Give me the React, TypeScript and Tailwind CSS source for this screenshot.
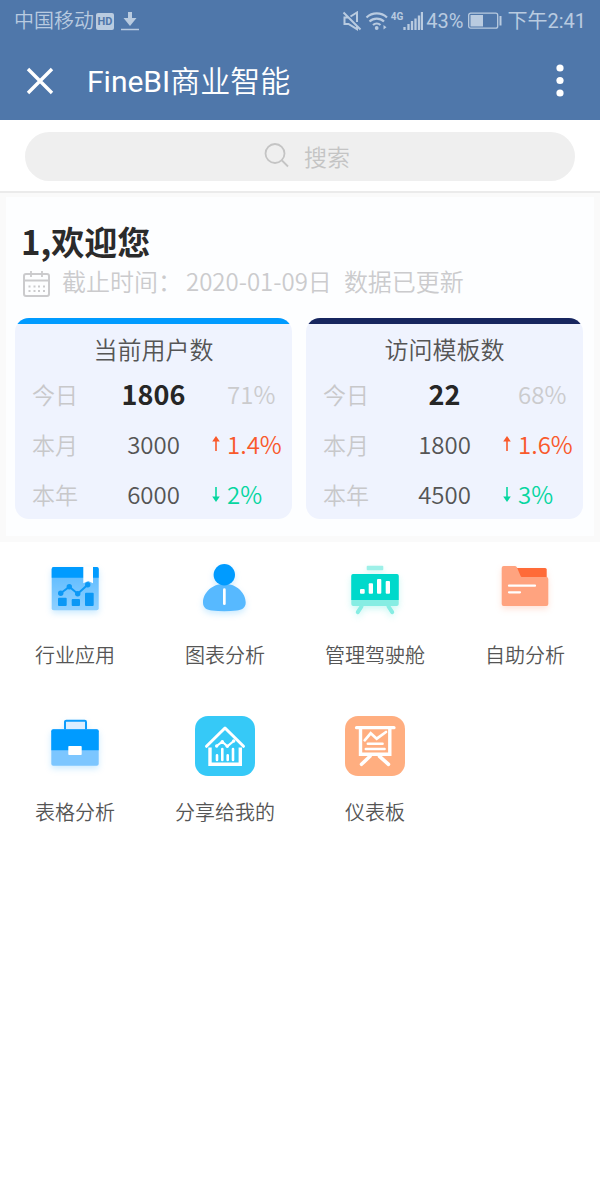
import React from "react";

type Trend = "up" | "down" | "none";

interface StatRow {
  label: string;
  value: string;
  percent: string;
  trend: Trend;
}

interface StatCardProps {
  title: string;
  barClass: string;
  rows: StatRow[];
}

const userRows: StatRow[] = [
  { label: "今日", value: "1806", percent: "71%", trend: "none" },
  { label: "本月", value: "3000", percent: "1.4%", trend: "up" },
  { label: "本年", value: "6000", percent: "2%", trend: "down" },
];

const templateRows: StatRow[] = [
  { label: "今日", value: "22", percent: "68%", trend: "none" },
  { label: "本月", value: "1800", percent: "1.6%", trend: "up" },
  { label: "本年", value: "4500", percent: "3%", trend: "down" },
];

const trendColors: Record<Trend, string> = {
  up: "text-[#f9592b]",
  down: "text-[#06d6a0]",
  none: "text-[#cbcbcd]",
};

const IndustryIcon = () => (
  <svg viewBox="0 0 60 60" className="size-15 drop-shadow-[0_3px_3px_rgba(0,155,255,0.2)]" aria-hidden="true">
    <defs>
      <linearGradient id="industry" x1="0" y1="0" x2="0" y2="1">
        <stop offset="0" stopColor="#57b9ff" />
        <stop offset="1" stopColor="#8fd0ff" />
      </linearGradient>
    </defs>
    <rect x="6.7" y="8" width="47" height="43.3" rx="2" fill="url(#industry)" />
    <path d="M6.700 18.700V10a2 2 0 0 1 2-2h43a2 2 0 0 1 2 2v8.700z" fill="#009bff" />
    <path d="M38.300 7.500h9.700v16.800l-4.800-2.300-4.900 2.300z" fill="#fff" />
    <path d="M15.700 34.300l8.600-6.600 8.400 7 10-9" fill="none" stroke="#0b98f5" strokeWidth="2" />
    <g fill="#0b98f5">
      <circle cx="15.700" cy="34.300" r="2.700" />
      <circle cx="24.300" cy="27.700" r="2.700" />
      <circle cx="32.700" cy="34.700" r="2.700" />
      <circle cx="42.700" cy="25.700" r="2.700" />
      <rect x="13" y="38.700" width="8.700" height="8.300" rx="1" />
      <rect x="26.700" y="40" width="8.300" height="7" rx="1" />
      <rect x="40" y="33.700" width="8.700" height="13.300" rx="1" />
    </g>
  </svg>
);

const PersonIcon = () => (
  <svg viewBox="0 0 60 60" className="size-15 drop-shadow-[0_3px_3px_rgba(0,155,255,0.2)]" aria-hidden="true">
    <path d="M29.300 24.700C17 24.700 8 34 8 43.500 8 49 12 51 17 51.600c8 .9 16.600.9 24.600 0 5-.6 9.100-2.600 9.100-8.100 0-9.500-9-18.800-21.400-18.800z" fill="#57b9ff" />
    <circle cx="29.300" cy="15.700" r="10.700" fill="#009bff" />
    <rect x="28" y="29.300" width="2.700" height="16.700" rx="1.300" fill="#fff" />
  </svg>
);

const CockpitIcon = () => (
  <svg viewBox="0 0 60 60" className="size-15 drop-shadow-[0_3px_3px_rgba(0,220,200,0.2)]" aria-hidden="true">
    <rect x="21.700" y="6.700" width="16.600" height="4.600" rx="1" fill="#9df0e8" />
    <rect x="6.300" y="15" width="47.400" height="32" rx="2" fill="#86ede3" />
    <path d="M6.300 41V17a2 2 0 0 1 2-2h43.400a2 2 0 0 1 2 2v24z" fill="#00d9cb" />
    <path d="M16.500 47.500l-3.700 5.700M43.500 47.500l3.700 5.700" stroke="#86ede3" strokeWidth="4" strokeLinecap="round" />
    <g fill="#fff">
      <rect x="15" y="30" width="4.700" height="4.700" rx="1" />
      <rect x="23.700" y="24.300" width="4.300" height="10.400" rx="1" />
      <rect x="32" y="20" width="4.300" height="14.700" rx="1" />
      <rect x="40.700" y="22" width="4.300" height="12.700" rx="1" />
    </g>
  </svg>
);

const FolderIcon = () => (
  <svg viewBox="0 0 60 60" className="size-15 drop-shadow-[0_3px_3px_rgba(255,110,60,0.2)]" aria-hidden="true">
    <rect x="20" y="9" width="31.700" height="14" rx="1.500" fill="#ff6b38" />
    <path d="M6.700 9a2 2 0 0 1 2-2h10.800c1.200 0 2 .5 2.500 1.500l3.400 8c.4 1 1 1.500 2 1.500h23.900a2 2 0 0 1 2 2v25a2 2 0 0 1-2 2H8.700a2 2 0 0 1-2-2z" fill="#ffa37f" />
    <path d="M14 26.700h26M14 33.300h11" stroke="#fff" strokeWidth="2.200" strokeLinecap="round" />
  </svg>
);

const BriefcaseIcon = () => (
  <svg viewBox="0 0 60 60" className="size-15 drop-shadow-[0_3px_3px_rgba(0,155,255,0.2)]" aria-hidden="true">
    <path d="M20 14V6a1.300 1.300 0 0 1 1.300-1.300h18.400A1.300 1.300 0 0 1 41 6v8" fill="#dceeff" stroke="#0d9cfb" strokeWidth="2" />
    <rect x="6.300" y="13.300" width="47.400" height="36.400" rx="2" fill="#7cc6ff" />
    <path d="M6.300 34.300v-19a2 2 0 0 1 2-2h43.400a2 2 0 0 1 2 2v19z" fill="#009bff" />
    <rect x="23.300" y="30" width="13.400" height="9" rx="0.800" fill="#fff" />
  </svg>
);

const ShareIcon = () => (
  <svg viewBox="0 0 60 60" className="size-15" aria-hidden="true">
    <rect width="60" height="60" rx="13" fill="#36c9f7" />
    <g fill="none" stroke="#fff" strokeLinecap="round" strokeLinejoin="round">
      <path d="M11.500 30.300L30 12l18.500 18.300" strokeWidth="3" />
      <path d="M15 31.500v16.800h30.300V31.500" strokeWidth="3.400" strokeLinecap="butt" strokeLinejoin="miter" />
      <path d="M21.700 30l5.600-4.300 5 4.600 6.400-5.300" strokeWidth="2.200" />
      <path d="M22 39.200V44M27.300 33v11M32.700 39.200V44M38 33v11" strokeWidth="2.600" />
    </g>
    <g fill="#fff">
      <circle cx="21.700" cy="30" r="1.700" />
      <circle cx="27.300" cy="25.700" r="1.700" />
      <circle cx="32.300" cy="30.300" r="1.700" />
      <circle cx="38.700" cy="25" r="1.700" />
    </g>
  </svg>
);

const BoardIcon = () => (
  <svg viewBox="0 0 60 60" className="size-15" aria-hidden="true">
    <rect width="60" height="60" rx="13" fill="#ffae80" />
    <g fill="none" stroke="#fff" strokeLinecap="round">
      <path d="M11.500 11.700h37.500" strokeWidth="3.200" />
      <path d="M15.500 12v26.300h29.300V12" strokeWidth="3.400" />
      <path d="M19.700 24.300l6-7 6 5.400L41 16" strokeWidth="2.700" />
      <path d="M22.800 27.700h14.800M20.800 33h18.800" strokeWidth="2.500" />
      <path d="M25 40.300l-8.500 8M34.500 40.300l9 8" strokeWidth="3.600" />
    </g>
  </svg>
);

const apps = [
  { name: "行业应用", Icon: IndustryIcon },
  { name: "图表分析", Icon: PersonIcon },
  { name: "管理驾驶舱", Icon: CockpitIcon },
  { name: "自助分析", Icon: FolderIcon },
  { name: "表格分析", Icon: BriefcaseIcon },
  { name: "分享给我的", Icon: ShareIcon },
  { name: "仪表板", Icon: BoardIcon },
];

const StatusBar = () => (
  <div className="flex h-[42px] items-center justify-between px-[14px] text-xl leading-6 text-[#b9cbe0]">
    <div className="flex items-center gap-[2px]">
      <span className="font-[350]">中国移动</span>
      <span className="flex h-[17px] w-[18px] items-center justify-center rounded-xs bg-[#b9cbe0] text-[11px] leading-none font-bold text-[#4f77aa]">
        HD
      </span>
      <svg viewBox="0 0 20 20" className="ml-1 size-5" aria-hidden="true">
        <path d="M8 1h4v6h4.500L10 15 3.500 7H8z" fill="currentColor" />
        <path d="M1 18.500h18" stroke="currentColor" strokeWidth="1.500" />
      </svg>
    </div>
    <div className="flex items-center">
      {/* Muted speaker */}
      <svg viewBox="0 0 20 20" className="mr-[3px] size-5" fill="none" stroke="currentColor" strokeWidth="2" aria-hidden="true">
        <path d="M6.500 6.500H2.500v6.500h4l8.500 5.200v-3.500M8.500 5.500L15 1.500v9.500M1.500 1.500l17 17" />
      </svg>
      {/* Wifi */}
      <svg viewBox="0 0 24 20" className="mr-[2px] h-5 w-6" fill="none" stroke="currentColor" strokeWidth="2.200" aria-hidden="true">
        <path d="M1.500 6.500a15 15 0 0 1 20.500 0M4.500 10.500a10.500 10.500 0 0 1 14.500 0M8 14a5.500 5.500 0 0 1 7.500 0" />
        <circle cx="11.700" cy="17" r="1.900" fill="currentColor" stroke="none" />
        <path d="M18.500 14v4.500l3-2.200z" fill="currentColor" stroke="none" />
      </svg>
      <span className="h-6 text-[10px] leading-4 font-bold">4G</span>
      <svg viewBox="0 0 20 20" className="mr-[3px] h-5 w-5" stroke="currentColor" strokeWidth="2.300" aria-hidden="true">
        <path d="M1.500 19v-3M5.500 19v-6M9 19V10M12.500 19V7.500M16 19V4.500M19 19V1" />
      </svg>
      <span>43%</span>
      <svg viewBox="0 0 34 18" className="mx-[5px] h-[18px] w-[34px]" aria-hidden="true">
        <rect x="0.700" y="1.200" width="29" height="15" rx="2" fill="none" stroke="currentColor" strokeWidth="1.300" />
        <rect x="2.500" y="3" width="12.500" height="11.500" fill="currentColor" />
        <rect x="31.500" y="4" width="2" height="9.500" fill="currentColor" />
      </svg>
      <span>下午2:41</span>
    </div>
  </div>
);

const TrendArrow = ({ trend }: { trend: Trend }) => (
  <svg viewBox="0 0 16 20" className="h-5 w-4 shrink-0" aria-hidden="true">
    {trend === "up" && <path d="M5 2l3.800 5.500h-3V17H4.200V7.500h-3z" fill="currentColor" />}
    {trend === "down" && <path d="M5 18l3.800-5.500h-3V3H4.200v9.500h-3z" fill="currentColor" />}
  </svg>
);

const StatCard = ({ title, barClass, rows }: StatCardProps) => (
  <section className="overflow-hidden rounded-[14px] bg-[#eff3fe]">
    <div className={barClass} />
    <h2 className="pt-[5px] text-center text-2xl leading-10 font-[350] text-[#555]">{title}</h2>
    <table className="w-full table-fixed" aria-label={title}>
      <tbody>
        {rows.map((row, index) => (
          <tr key={row.label} className="h-[50px] leading-6">
            <th scope="row" className="w-[35%] pl-[17px] text-left text-[23px] font-[350] text-[#c8c8ca]">
              {row.label}
            </th>
            <td
              className={
                index === 0
                  ? "w-[30%] text-center text-[27px] font-bold text-[#262626]"
                  : "w-[30%] text-center text-2xl font-[350] text-[#555]"
              }
            >
              {row.value}
            </td>
            <td className={trendColors[row.trend]}>
              <div className="flex items-center pl-4 text-2xl leading-6 font-[350]">
                <TrendArrow trend={row.trend} />
                {row.percent}
              </div>
            </td>
          </tr>
        ))}
      </tbody>
    </table>
  </section>
);

const App = () => {
  return (
    <div className="min-h-screen bg-white font-['Noto_Sans_CJK_SC',sans-serif]">
      {/* Header */}
      <header className="bg-[#4f77aa] font-[Roboto,'Noto_Sans_CJK_SC',sans-serif]">
        <StatusBar />
        <div className="flex h-[78px] items-center pr-[30px] pl-[25px] text-white">
          <button type="button" aria-label="关闭">
            <svg viewBox="0 0 30 30" className="size-[30px]" aria-hidden="true">
              <path d="M3 3l24 24M27 3L3 27" stroke="currentColor" strokeWidth="3.400" />
            </svg>
          </button>
          <h1 className="ml-8 flex-1 pt-[2px] text-[30px] leading-9">
            FineBI<span className="font-[350]">商业智能</span>
          </h1>
          <button type="button" aria-label="更多">
            <svg viewBox="0 0 20 36" className="h-9 w-5" fill="currentColor" aria-hidden="true">
              <circle cx="10" cy="5" r="3.600" />
              <circle cx="10" cy="17.500" r="3.600" />
              <circle cx="10" cy="30" r="3.600" />
            </svg>
          </button>
        </div>
      </header>

      {/* Search */}
      <div className="border-b-2 border-[#ebebeb] px-[25px] pt-3 pb-[10px]">
        <label className="flex h-[49px] items-center justify-center gap-[14px] rounded-full bg-[#efefef] pl-4">
          <svg viewBox="0 0 26 26" className="mb-1 size-[26px] text-[#c4c4c4]" fill="none" stroke="currentColor" strokeWidth="1.800" aria-hidden="true">
            <circle cx="11" cy="11.500" r="9.500" />
            <path d="M18 18.500l6 6" />
          </svg>
          <input
            type="text"
            aria-label="搜索"
            placeholder="搜索"
            className="w-12 bg-transparent text-[23px] font-[350] outline-none placeholder:text-[#c4c4c4]"
          />
        </label>
      </div>

      {/* Overview */}
      <div className="bg-[#fafafa] px-[6px] pt-1 pb-[6px]">
        <div className="bg-[#fdfeff] px-[9px] pt-5 pb-[17px]">
          <h2 className="px-[6px] text-[33px] leading-12 font-bold text-[#2b2b2b]">1,欢迎您</h2>
          <div className="flex items-center px-2 text-2xl leading-8 font-[350] text-[#cbcbcd]">
            <svg viewBox="0 0 27 26" className="mt-[6px] mr-3 h-[26px] w-[27px]" fill="none" stroke="currentColor" aria-hidden="true">
              <rect x="1" y="3" width="25" height="22" rx="2" strokeWidth="2" />
              <path d="M1 9.500h25M8 0v6M19 0v6" strokeWidth="1.800" />
              <path d="M5.500 15.500h2M10.500 15.500h2M15 15.500h2M20 15.500h2M5.500 20h2M10.500 20h2M15 20h2M20 20h2" strokeWidth="2" />
            </svg>
            <span>截止时间：</span>
            <span className="ml-1">2020-01-09日</span>
            <span className="ml-3">数据已更新</span>
          </div>
          <div className="mt-[21px] grid grid-cols-2 gap-[14px] pr-[2px]">
            <StatCard title="当前用户数" barClass="h-[6px] bg-[#009bff]" rows={userRows} />
            <StatCard title="访问模板数" barClass="h-[6px] bg-[#17265f]" rows={templateRows} />
          </div>
        </div>
      </div>

      {/* App shortcuts */}
      <nav className="grid grid-cols-4 gap-y-[49px] pt-[17px]">
        {apps.map(({ name, Icon }) => (
          <a key={name} href="#" className="flex flex-col items-center gap-6">
            <Icon />
            <span className="text-xl leading-6 font-[350] text-[#555]">{name}</span>
          </a>
        ))}
      </nav>
    </div>
  );
};

export default App;
